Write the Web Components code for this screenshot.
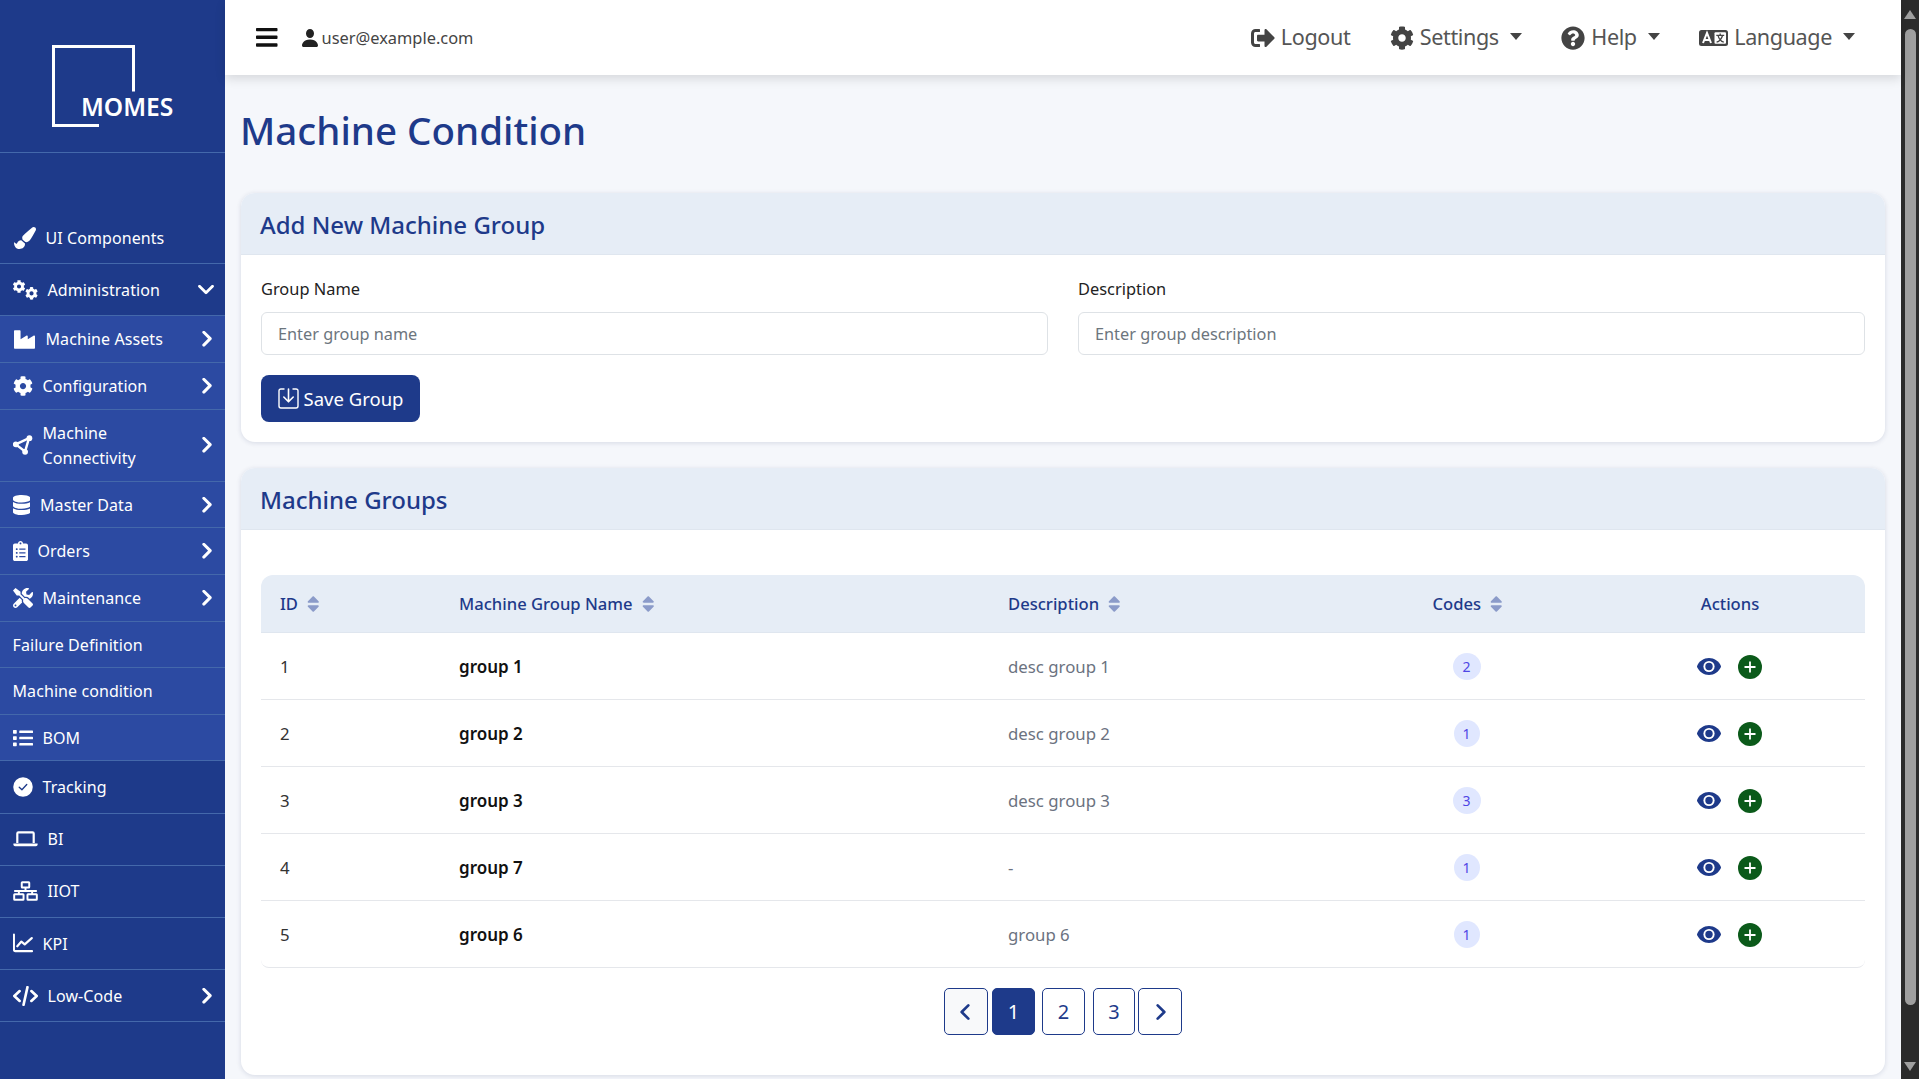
<!DOCTYPE html>
<html lang="en"><head><meta charset="utf-8"><title>Machine Condition</title>
<style>
html,body{margin:0;height:100%;overflow:hidden;background:#f5f7fb;font-family:"Noto Sans","Open Sans",sans-serif;font-size:16px}
</style></head><body>
<mom-app>
  <mom-sidebar slot="side">
    <mom-nav icon="brush" size="22" pad="12.8">UI Components</mom-nav>
    <mom-nav icon="gears" pad="12.8" chev="down">Administration</mom-nav>
    <mom-nav icon="industry" size="21" light chev="right">Machine Assets</mom-nav>
    <mom-nav icon="cog" light chev="right">Configuration</mom-nav>
    <mom-nav icon="conn" light chev="right">Machine<br>Connectivity</mom-nav>
    <mom-nav icon="database" light chev="right">Master Data</mom-nav>
    <mom-nav icon="clip" light chev="right">Orders</mom-nav>
    <mom-nav icon="tools" light chev="right">Maintenance</mom-nav>
    <mom-nav light>Failure Definition</mom-nav>
    <mom-nav light>Machine condition</mom-nav>
    <mom-nav icon="list" light>BOM</mom-nav>
    <mom-nav icon="check" pad="12.8">Tracking</mom-nav>
    <mom-nav icon="laptop" pad="12.8">BI</mom-nav>
    <mom-nav icon="net" pad="12.8">IIOT</mom-nav>
    <mom-nav icon="chart" pad="12.8">KPI</mom-nav>
    <mom-nav icon="code" pad="12.8" chev="right">Low-Code</mom-nav>
  </mom-sidebar>
  <mom-topbar slot="top"></mom-topbar>
  <mom-page slot="main">
    <mom-card heading="Add New Machine Group"><mom-form></mom-form></mom-card>
    <mom-card heading="Machine Groups"><mom-table></mom-table></mom-card>
  </mom-page>
  <mom-scrollbar slot="bar"></mom-scrollbar>
</mom-app>
<script>
const COG='M487.4 315.7l-42.6-24.6c4.3-23.2 4.3-47 0-70.2l42.6-24.6c4.9-2.8 7.1-8.6 5.5-14-11.1-35.6-30-67.8-54.7-94.6-3.8-4.1-10-5.1-14.8-2.3L380.8 110c-17.9-15.4-38.5-27.3-60.8-35.1V25.8c0-5.6-3.9-10.5-9.4-11.7-36.7-8.2-74.3-7.8-109.2 0-5.5 1.2-9.4 6.1-9.4 11.7V75c-22.2 7.9-42.8 19.8-60.8 35.1L88.7 85.5c-4.9-2.8-11-1.9-14.8 2.3-24.7 26.7-43.6 58.9-54.7 94.6-1.7 5.4.6 11.2 5.5 14L67.3 221c-4.3 23.2-4.3 47 0 70.2l-42.6 24.6c-4.9 2.8-7.1 8.6-5.5 14 11.1 35.6 30 67.8 54.7 94.6 3.8 4.1 10 5.1 14.8 2.3l42.6-24.6c17.9 15.4 38.5 27.3 60.8 35.1v49.2c0 5.6 3.9 10.5 9.4 11.7 36.7 8.2 74.3 7.8 109.2 0 5.5-1.2 9.4-6.1 9.4-11.7v-49.2c22.2-7.9 42.8-19.8 60.8-35.1l42.6 24.6c4.9 2.8 11 1.9 14.8-2.3 24.7-26.7 43.6-58.9 54.7-94.6 1.5-5.5-.7-11.3-5.6-14.1zM256 336c-44.1 0-80-35.9-80-80s35.9-80 80-80 80 35.9 80 80-35.9 80-80 80z';
const ICONS={
bars:[448,'M16 132h416c8.837 0 16-7.163 16-16V76c0-8.837-7.163-16-16-16H16C7.163 60 0 67.163 0 76v40c0 8.837 7.163 16 16 16zm0 160h416c8.837 0 16-7.163 16-16v-40c0-8.837-7.163-16-16-16H16c-8.837 0-16 7.163-16 16v40c0 8.837 7.163 16 16 16zm0 160h416c8.837 0 16-7.163 16-16v-40c0-8.837-7.163-16-16-16H16c-8.837 0-16 7.163-16 16v40c0 8.837 7.163 16 16 16z'],
logout:[512,'M497 273L329 441c-15 15-41 4.5-41-17v-96H152c-13.3 0-24-10.7-24-24v-96c0-13.3 10.7-24 24-24h136V88c0-21.4 25.9-32 41-17l168 168c9.3 9.4 9.3 24.6 0 34zM192 436v-40c0-6.6-5.4-12-12-12H96c-17.7 0-32-14.3-32-32V160c0-17.7 14.3-32 32-32h84c6.6 0 12-5.4 12-12V76c0-6.6-5.4-12-12-12H96c-53 0-96 43-96 96v192c0 53 43 96 96 96h84c6.6 0 12-5.4 12-12z'],
help:[512,'M504 256c0 136.997-111.043 248-248 248S8 392.997 8 256C8 119.083 119.043 8 256 8s248 111.083 248 248zM262.655 90c-54.497 0-89.255 22.957-116.549 63.758-3.536 5.286-2.353 12.415 2.715 16.258l34.699 26.31c5.205 3.947 12.621 3.008 16.665-2.122 17.864-22.658 30.113-35.797 57.303-35.797 20.429 0 45.698 13.148 45.698 32.958 0 14.976-12.363 22.667-32.534 33.976C247.128 238.528 216 254.941 216 296v4c0 6.627 5.373 12 12 12h56c6.627 0 12-5.373 12-12v-1.333c0-28.462 83.186-29.647 83.186-106.667 0-58.002-60.165-102-116.531-102zM256 338c-25.365 0-46 20.635-46 46 0 25.364 20.635 46 46 46s46-20.636 46-46c0-25.365-20.635-46-46-46z'],
cog:[512,COG],
brush:[512,'M167.02 309.34c-40.12 2.58-76.53 17.86-97.19 72.3-2.35 6.21-8 9.98-14.59 9.98-11.11 0-45.46-27.67-55.25-34.35C0 439.62 37.93 512 128 512c75.86 0 128-43.77 128-120.19 0-3.11-.65-6.08-.97-9.13l-88.01-73.34zM457.89 0c-15.16 0-29.37 6.71-40.21 16.45C213.27 199.05 192 203.34 192 257.09c0 13.7 3.25 26.76 8.73 38.7l63.82 53.18c7.21 1.8 14.64 3.03 22.39 3.03 62.11 0 98.11-45.47 211.16-256.46 7.38-14.35 13.9-29.85 13.9-45.99C512 20.64 486 0 457.89 0z'],
industry:[512,'M475.115 163.781L336 252.309v-68.28c0-18.916-20.931-30.399-36.885-20.248L160 252.309V56c0-13.255-10.745-24-24-24H24C10.745 32 0 42.745 0 56v400c0 13.255 10.745 24 24 24h464c13.255 0 24-10.745 24-24V184.029c0-18.917-20.931-30.399-36.885-20.248z'],
database:[448,'M448 73.143v45.714C448 159.143 347.667 192 224 192S0 159.143 0 118.857V73.143C0 32.857 100.333 0 224 0s224 32.857 224 73.143zM448 176v102.857C448 319.143 347.667 352 224 352S0 319.143 0 278.857V176c48.125 33.143 136.208 48.572 224 48.572S399.874 209.143 448 176zm0 160v102.857C448 479.143 347.667 512 224 512S0 479.143 0 438.857V336c48.125 33.143 136.208 48.572 224 48.572S399.874 369.143 448 336z'],
clip:[384,'M336 64h-80c0-35.3-28.7-64-64-64s-64 28.7-64 64H48C21.5 64 0 85.5 0 112v352c0 26.5 21.5 48 48 48h288c26.5 0 48-21.5 48-48V112c0-26.5-21.5-48-48-48zM96 424c-13.3 0-24-10.7-24-24s10.7-24 24-24 24 10.7 24 24-10.7 24-24 24zm0-96c-13.3 0-24-10.7-24-24s10.7-24 24-24 24 10.7 24 24-10.7 24-24 24zm0-96c-13.3 0-24-10.7-24-24s10.7-24 24-24 24 10.7 24 24-10.7 24-24 24zm96-192c13.3 0 24 10.7 24 24s-10.7 24-24 24-24-10.7-24-24 10.7-24 24-24zm128 368c0 4.4-3.6 8-8 8H168c-4.4 0-8-3.6-8-8v-16c0-4.4 3.6-8 8-8h144c4.4 0 8 3.6 8 8v16zm0-96c0 4.4-3.6 8-8 8H168c-4.4 0-8-3.6-8-8v-16c0-4.4 3.6-8 8-8h144c4.4 0 8 3.6 8 8v16zm0-96c0 4.4-3.6 8-8 8H168c-4.4 0-8-3.6-8-8v-16c0-4.4 3.6-8 8-8h144c4.4 0 8 3.6 8 8v16z'],
tools:[512,'M501.1 395.7L384 278.6c-23.1-23.1-57.6-27.6-85.4-13.9L192 158.1V96L64 0 0 64l96 128h62.1l106.6 106.6c-13.6 27.8-9.2 62.3 13.9 85.4l117.1 117.1c14.6 14.6 38.2 14.6 52.7 0l52.7-52.7c14.5-14.6 14.5-38.2 0-52.7zM331.7 225c28.3 0 54.9 11 74.9 31l19.4 19.4c15.8-6.9 30.8-16.5 43.8-29.5 37.1-37.1 49.7-89.3 37.9-136.7-2.2-9-13.5-12.1-20.1-5.5l-74.4 74.4-67.9-11.3L334 98.9l74.4-74.4c6.6-6.6 3.4-17.9-5.7-20.2-47.4-11.7-99.6.9-136.6 37.9-28.5 28.5-41.9 66.1-41.2 103.6l82.1 82.1c8.1-1.9 16.5-2.9 24.7-2.9zm-103.9 82l-56.7-56.7L18.7 402.8c-25 25-25 65.5 0 90.5s65.5 25 90.5 0l123.6-123.6c-7.6-19.9-9.9-41.6-5-62.7zM64 472c-13.2 0-24-10.8-24-24 0-13.3 10.7-24 24-24s24 10.7 24 24c0 13.2-10.7 24-24 24z'],
list:[512,'M80 368H16a16 16 0 0 0-16 16v64a16 16 0 0 0 16 16h64a16 16 0 0 0 16-16v-64a16 16 0 0 0-16-16zm0-320H16A16 16 0 0 0 0 64v64a16 16 0 0 0 16 16h64a16 16 0 0 0 16-16V64a16 16 0 0 0-16-16zm0 160H16a16 16 0 0 0-16 16v64a16 16 0 0 0 16 16h64a16 16 0 0 0 16-16v-64a16 16 0 0 0-16-16zm416 176H176a16 16 0 0 0-16 16v32a16 16 0 0 0 16 16h320a16 16 0 0 0 16-16v-32a16 16 0 0 0-16-16zm0-320H176a16 16 0 0 0-16 16v32a16 16 0 0 0 16 16h320a16 16 0 0 0 16-16V80a16 16 0 0 0-16-16zm0 160H176a16 16 0 0 0-16 16v32a16 16 0 0 0 16 16h320a16 16 0 0 0 16-16v-32a16 16 0 0 0-16-16z'],
sort:[320,'M41 288h238c21.4 0 32.1 25.9 17 41L177 448c-9.4 9.4-24.6 9.4-33.9 0L24 329c-15.1-15.1-4.4-41 17-41zm255-105L177 64c-9.4-9.4-24.6-9.4-33.9 0L24 183c-15.1 15.1-4.4 41 17 41h238c21.4 0 32.1-25.9 17-41z']
};
const STROKE={
gears:`<g fill="currentColor"><path transform="translate(-12 0) scale(.65)" d="${COG}"/><path transform="translate(308 176) scale(.65)" d="${COG}"/></g>`,
conn:`<path d="M70 240 L410 80 L310 420 Z" fill="none" stroke="currentColor" stroke-width="62" stroke-linejoin="round"/><g fill="currentColor"><circle cx="70" cy="240" r="74"/><circle cx="420" cy="80" r="74"/><circle cx="310" cy="430" r="74"/></g>`,
check:`<circle cx="256" cy="256" r="250" fill="currentColor"/><path d="M160 262 L228 326 L352 194" fill="none" stroke="#1e3a8a" stroke-width="34" stroke-linecap="round" stroke-linejoin="round"/>`,
laptop:`<g fill="none" stroke="currentColor" stroke-width="56" stroke-linejoin="round"><path d="M110 360 V116 Q110 86 140 86 H500 Q530 86 530 116 V360"/></g><path d="M10 372 H630 V396 Q630 440 586 440 H54 Q10 440 10 396 Z" fill="currentColor"/>`,
net:`<g fill="none" stroke="currentColor" stroke-width="50"><rect x="224" y="30" width="192" height="136" rx="14"/><rect x="30" y="340" width="240" height="142" rx="14"/><rect x="370" y="340" width="240" height="142" rx="14"/><path d="M30 254 H610 M320 166 V254 M150 254 V340 M490 254 V340"/></g>`,
chart:`<g fill="none" stroke="currentColor" stroke-linejoin="round"><path d="M24 40 V430 Q24 464 58 464 H490" stroke-width="52" stroke-linecap="round"/><path d="M110 340 L215 220 L300 290 L480 130" stroke-width="56" stroke-linecap="round"/></g>`,
code:`<g fill="none" stroke="currentColor" stroke-width="68" stroke-linecap="round" stroke-linejoin="round"><path d="M170 130 L34 256 L170 382 M470 130 L606 256 L470 382 M370 30 L270 482"/></g>`
};
const STROKE_W={gears:640,conn:512,check:512,laptop:640,net:640,chart:512,code:640};
function icon(name,size,extra=''){
  if(STROKE[name]) return `<svg ${extra} width="${size*STROKE_W[name]/512}" height="${size}" viewBox="0 0 ${STROKE_W[name]} 512" aria-hidden="true">${STROKE[name]}</svg>`;
  const [w,d]=ICONS[name];
  return `<svg ${extra} width="${size*w/512}" height="${size}" viewBox="0 0 ${w} 512" fill="currentColor" aria-hidden="true"><path d="${d}"/></svg>`;
}
function chev(dir,w=9,h=15,sw=2.6){
  return `<svg width="${w}" height="${h}" viewBox="0 0 9 15" aria-hidden="true"><path d="${dir==='left'?'M7.5 1.5 L1.5 7.5 L7.500 13.5':'M1.5 1.5 L7.5 7.5 L1.5 13.5'}" fill="none" stroke="currentColor" stroke-width="${sw}" stroke-linecap="round" stroke-linejoin="round"/></svg>`;
}
const TEXT='"Noto Sans","Open Sans",sans-serif';
function def(name,html){
  customElements.define(name,class extends HTMLElement{
    constructor(){super();this.attachShadow({mode:'open'});}
    connectedCallback(){this.shadowRoot.innerHTML=typeof html==='function'?html(this):html;}
  });
}
def('mom-app',`<style>
:host{display:grid;grid-template-columns:225px minmax(0,1fr) 18px;grid-template-rows:75px minmax(0,1fr);height:1079px;width:1919px;overflow:hidden;background:#f5f7fb}
::slotted([slot=side]){grid-row:1/3}
::slotted([slot=bar]){grid-column:3;grid-row:1/3}
::slotted([slot=top]){grid-column:2;grid-row:1;z-index:1}
::slotted([slot=main]){grid-column:2;grid-row:2;min-height:0}
</style><slot name="side"></slot><slot name="top"></slot><slot name="main"></slot><slot name="bar"></slot>`);

def('mom-sidebar',`<style>
:host{display:block;background:#1e3a8a;color:#fff;overflow:hidden}
.brand{height:152px;border-bottom:1px solid #4468ab;position:relative}
.brand svg{position:absolute;left:52px;top:45px}
.brand span{position:absolute;left:81px;top:90px;font:600 24.6px/34px ${TEXT};color:#fff}
nav{margin-top:59px;display:block}
</style>
<div class="brand"><svg width="84" height="83" viewBox="0 0 84 83" aria-hidden="true"><path d="M47 80.5 H1.5 V1.5 H81.5 V46.5" fill="none" stroke="#fff" stroke-width="3"/></svg><span>MOMES</span></div>
<nav><slot></slot></nav>`);

def('mom-nav',el=>{
  const ic=el.getAttribute('icon'),ch=el.getAttribute('chev'),pad=el.getAttribute('pad')||'10',size=+el.getAttribute('size')||20;
  const bg=el.hasAttribute('light')?'#2c4aa2':'transparent';
  let chevron='';
  if(ch==='right')chevron=`<span class="c r">${chev('right',10,16,2.8)}</span>`;
  if(ch==='down')chevron=`<span class="c d"><svg width="16" height="10" viewBox="0 0 16 10" aria-hidden="true"><path d="M1.5 1.5 L8 8 L14.5 1.5" fill="none" stroke="currentColor" stroke-width="2.8" stroke-linecap="round" stroke-linejoin="round"/></svg></span>`;
  const adj=size>20?`margin-left:1px;margin-right:${size===22?10:11}px;margin-block:-1px`:'margin-right:10px';
  return `<style>
:host{display:block}
a{display:flex;align-items:center;padding:${pad}px 12.5px;background:${bg};border-bottom:1px solid #4468ab;font:400 16px/25.6px ${TEXT};color:#fff;position:relative}
svg{flex:none;display:block}
.i{display:flex;${adj}}
.t{flex:1;min-width:0;letter-spacing:.08px;transform:translateY(1px)}
.c{display:flex;position:absolute;top:50%;transform:translateY(-52%)}
.r{right:13px}.d{right:11px}
</style><a>${ic?`<span class="i">${icon(ic,size)}</span>`:''}<span class="t"><slot></slot></span>${chevron}</a>`;
});

def('mom-topbar',`<style>
:host{display:flex;align-items:center;height:75px;background:#fff;box-shadow:0 4px 10px rgba(0,0,0,.12);color:#444;font-family:${TEXT};padding:0 46px 0 31px;box-sizing:border-box}
svg{display:block;flex:none}
.burger{color:#111;margin-right:24px}
.user{display:flex;align-items:center;gap:4px;color:#444;font-size:16.4px}
.user svg{color:#222}
.end{margin-left:auto;display:flex;align-items:center}
.item{display:flex;align-items:center;gap:6px;font-size:21.6px;color:#555;margin-left:39.5px;letter-spacing:-.4px}
.item:first-child{margin-left:0}
.item b{font-weight:400;margin-top:-2px}
.item svg{color:#444}
.caret{width:0;height:0;border:6px solid transparent;border-top:7px solid #444;border-bottom:0;margin-left:5px;margin-top:-3px}
</style>
<span class="burger">${icon('bars',24.6)}</span>
<span class="user"><svg width="16" height="18" viewBox="2 2 12 12" preserveAspectRatio="none" fill="currentColor" aria-hidden="true"><path d="M3 14s-1 0-1-1 1-4 6-4 6 3 6 4-1 1-1 1zm5-6a3 3 0 1 0 0-6 3 3 0 0 0 0 6"/></svg>user@example.com</span>
<div class="end">
<span class="item">${icon('logout',24)}<b>Logout</b></span>
<span class="item">${icon('cog',24)}<b>Settings</b><i class="caret"></i></span>
<span class="item">${icon('help',24)}<b>Help</b><i class="caret"></i></span>
<span class="item"><svg width="29" height="16" viewBox="0 0 29 16" aria-hidden="true"><rect width="29" height="16" rx="2.500" fill="#444"/><path d="M4 13 L8 3 L12 13 M5.500 10H10.500" fill="none" stroke="#fff" stroke-width="2"/><rect x="15.500" y="2.300" width="11.500" height="11.400" rx="1" fill="#fff"/><path d="M17.300 5.300H25.200M21.200 3.500V5.300M19 5.300Q20.500 11 24.800 12.200M23.600 5.300Q22 11 17.600 12.200" fill="none" stroke="#444" stroke-width="1.300"/></svg><b>Language</b><i class="caret"></i></span>
</div>`);

def('mom-page',`<style>
:host{display:block;padding:0 16px;overflow:hidden}
h1{margin:0 0 0 -1px;padding:31px 0 39px;font:500 38.5px/48px ${TEXT};color:#1e3a8a}
.stack{display:flex;flex-direction:column;gap:26px}
</style><h1>Machine Condition</h1><div class="stack"><slot></slot></div>`);

def('mom-card',el=>`<style>
:host{display:block;background:#fff;border-radius:14px;box-shadow:0 1px 5px rgba(30,40,90,.14);overflow:hidden}
header{height:59px;padding:2px 19px 0;border-bottom:1px solid #dfe6ef;background:#e6edf6;display:flex;align-items:center;font:500 24px/32px ${TEXT};color:#1e3a8a}
</style><header>${el.getAttribute('heading')}</header><slot></slot>`);

def('mom-form',`<style>
:host{display:block;padding:22px 20px 20px;font-family:${TEXT}}
.g{display:grid;grid-template-columns:1fr 1fr;column-gap:30px}
label{display:block;font-size:16.4px;line-height:24px;color:#222;margin-bottom:11px}
.in{display:flex;align-items:center;height:43px;box-sizing:border-box;border:1px solid #dee2e6;border-radius:6px;background:#fff;padding:0 16px}
input{all:unset;flex:1;font:400 16.3px/24px ${TEXT};color:#222}
input::placeholder{color:#6c757d;opacity:1}
button{all:unset;box-sizing:border-box;margin-top:20px;height:47px;width:159px;background:#1e3a8a;color:#fff;border-radius:8px;display:flex;align-items:center;justify-content:center;gap:5px;font:400 18.5px/26px ${TEXT}}
svg{display:block;flex:none}
</style>
<div class="g">
<div><label>Group Name</label><div class="in"><input placeholder="Enter group name"></div></div>
<div><label>Description</label><div class="in"><input placeholder="Enter group description"></div></div>
</div>
<button><svg width="21" height="21" viewBox="0 0 21 21" aria-hidden="true"><path d="M6.5 1H3Q1 1 1 3V18Q1 20 3 20H18Q20 20 20 18V3Q20 1 18 1H14.5" fill="none" stroke="#fff" stroke-width="1.4"/><path d="M10.5 1V13.5M5.8 9L10.5 13.8L15.2 9" fill="none" stroke="#fff" stroke-width="1.6" stroke-linecap="round" stroke-linejoin="round"/></svg>Save Group</button>`);

const ROWS=[['1','group 1','desc group 1','2'],['2','group 2','desc group 2','1'],['3','group 3','desc group 3','3'],['4','group 7','-','1'],['5','group 6','group 6','1']];
def('mom-table',()=>`<style>
:host{display:block;padding:45px 20px 0;font-family:${TEXT}}
.wrap{border-radius:12px 12px 8px 8px;overflow:hidden;border-bottom:1px solid #e5e7eb}
table{width:1604px;table-layout:fixed;border-collapse:collapse;font-size:16.8px}
th{height:57px;padding:0 19px;background:#e6edf6;border-bottom:1px solid #dfe6ef;text-align:left;font-weight:500;font-size:16.6px;color:#1e3a8a;white-space:nowrap}
th span{display:inline-flex;align-items:center;gap:9px}
th svg{color:#8b9bc9;display:block}
td{height:66px;padding:0 19px;border-bottom:1px solid #e5e7eb;color:#333}
tr:last-child td{border-bottom:0}
td.ct{padding:0 20px 0 18px}
.ct{text-align:center}
b{font-weight:600;color:#111;font-size:17px}
.d{color:#6b7280}
.b{display:inline-flex;align-items:center;justify-content:center;height:27px;border-radius:50%;background:#e0e7ff;color:#4f46e5;font-size:14px}
.a{display:inline-flex;align-items:center;gap:17px;vertical-align:middle}
.a svg{display:block}
.pager{display:flex;justify-content:center;gap:3px;margin-top:20px;padding-bottom:40px}
.p{box-sizing:border-box;height:47px;display:flex;align-items:center;justify-content:center;border:1.4px solid #1e3a8a;border-radius:5px;color:#1e3a8a;font-size:20px;background:#fff}
.on{background:#1e3a8a;color:#fff}
.prev{background:#f8f9fa}
.prev svg{margin-left:-2px}
.next svg{margin-left:2px}
</style>
<div class="wrap"><table>
<colgroup><col style="width:179px"><col style="width:549px"><col style="width:351px"><col style="width:255px"><col style="width:270px"></colgroup>
<thead><tr><th><span>ID ${icon('sort',20)}</span></th><th><span>Machine Group Name ${icon('sort',20)}</span></th><th><span>Description ${icon('sort',20)}</span></th><th class="ct"><span>Codes ${icon('sort',20)}</span></th><th class="ct">Actions</th></tr></thead>
<tbody>${ROWS.map(r=>`<tr><td>${r[0]}</td><td><b>${r[1]}</b></td><td class="d">${r[2]}</td><td class="ct"><span class="b" style="width:${r[3]==='1'?26:28}px">${r[3]}</span></td><td class="ct"><span class="a"><svg width="24" height="17" viewBox="0 0 24 17" aria-hidden="true"><path d="M12 0C6.7 0 2.2 3.2.2 7.7a2 2 0 0 0 0 1.6C2.2 13.8 6.7 17 12 17s9.800-3.200 11.800-7.700a2 2 0 0 0 0-1.600C21.800 3.200 17.300 0 12 0z" fill="#1e3a8a"/><circle cx="12" cy="8.500" r="5.600" fill="#fff"/><circle cx="12" cy="8.500" r="3.700" fill="#1e3a8a"/></svg><svg width="24" height="24" viewBox="0 0 24 24" aria-hidden="true"><circle cx="12" cy="12" r="12" fill="#0b5a1a"/><path d="M12 6.500V17.500M6.500 12H17.500" stroke="#fff" stroke-width="1.800"/></svg></span></td></tr>`).join('')}</tbody>
</table></div>
<div class="pager"><span class="p prev" style="width:44px;margin-right:1px">${chev('left',10,18,2.4)}</span><span class="p on" style="width:43px;margin-right:4px">1</span><span class="p" style="width:43px;margin-right:5px">2</span><span class="p" style="width:42px">3</span><span class="p next" style="width:44px">${chev('right',10,18,2.4)}</span></div>`);

def('mom-scrollbar',`<style>
:host{display:block;background:#2b2b2b;position:relative}
.u,.d{position:absolute;left:3px;width:0;height:0;border:6px solid transparent}
.u{top:10px;border-top:0;border-bottom:9px solid #9f9f9f}
.d{bottom:8px;border-bottom:0;border-top:9px solid #9f9f9f}
.t{position:absolute;left:4px;width:11px;top:29px;height:976px;background:#9f9f9f;border-radius:6px}
</style><div class="u"></div><div class="t"></div><div class="d"></div>`);
</script>
</body></html>
